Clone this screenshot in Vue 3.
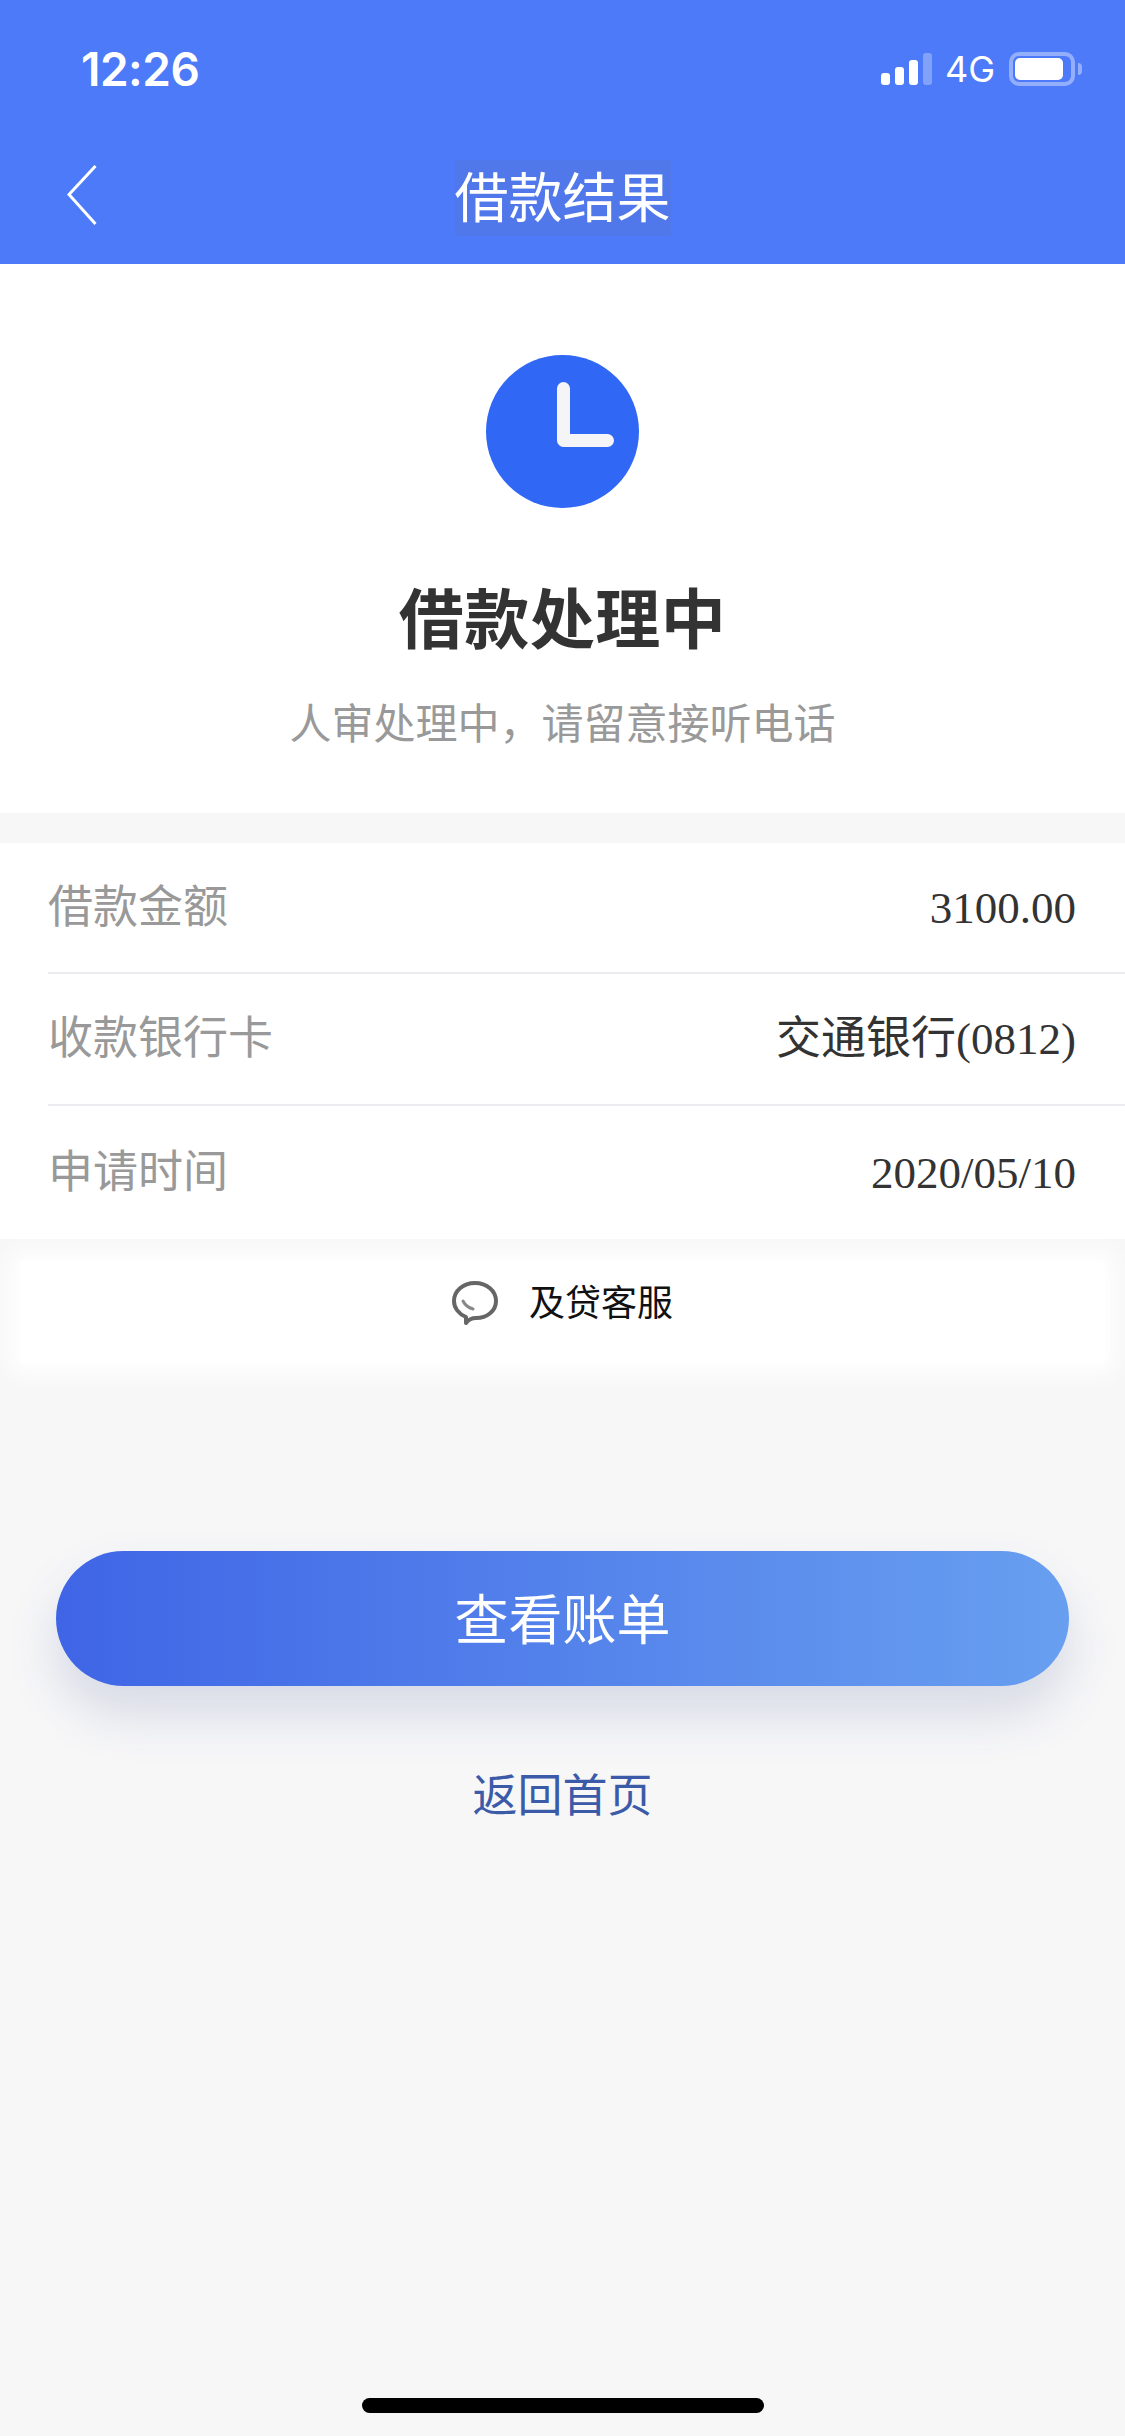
<template>
  <div class="page">
    <header class="header">
      <div class="status-bar">
        <span class="time">12:26</span>
        <div class="status-right">
          <div class="signal">
            <i class="bar b1"></i>
            <i class="bar b2"></i>
            <i class="bar b3"></i>
            <i class="bar b4"></i>
          </div>
          <span class="net">4G</span>
          <div class="battery"><i class="battery-level"></i></div>
          <i class="battery-cap"></i>
        </div>
      </div>
      <div class="nav">
        <svg class="back" viewBox="0 0 30 60" width="30" height="60" fill="none" stroke="#fff" stroke-width="3">
          <path d="M28.5 1 L2 29.5 L28.5 59" />
        </svg>
        <span class="nav-title">借款结果</span>
        <span></span>
      </div>
    </header>

    <section class="hero">
      <div class="clock">
        <svg viewBox="0 0 153 153" width="153" height="153" fill="none" stroke="#f5f5f7" stroke-width="13" stroke-linecap="round" stroke-linejoin="round">
          <path d="M77.5 33.5 V85.5 H121.5" />
        </svg>
      </div>
      <h1 class="hero-title">借款处理中</h1>
      <p class="hero-sub">人审处理中，请留意接听电话</p>
    </section>

    <section class="list">
      <div v-for="row in rows" :key="row.label" class="row">
        <span class="label">{{ row.label }}</span>
        <span class="value">{{ row.value }}</span>
      </div>
    </section>

    <div class="support">
      <svg viewBox="0 0 46 45" width="46" height="45" fill="none" stroke="#666" stroke-width="4" stroke-linejoin="round">
        <path d="M23 2C35 2 44 10 44 20C44 30 35 37 24 37C21 37 17 38 14 42L14 36C7 33 2 27 2 20C2 10 11 2 23 2Z" />
        <path d="M11 20Q14 26 21 28" stroke="#888" stroke-width="3" stroke-linecap="round" />
      </svg>
      <span>及贷客服</span>
    </div>

    <button class="primary">查看账单</button>
    <a class="home-link">返回首页</a>

    <div class="home-indicator"></div>
  </div>
</template>

<script setup>
const rows = [
  { label: '借款金额', value: '3100.00' },
  { label: '收款银行卡', value: '交通银行(0812)' },
  { label: '申请时间', value: '2020/05/10' }
]
</script>

<style>
html, body { margin: 0; background: #f7f7f8; }
</style>

<style scoped>
.page {
  width: 1125px;
  min-height: 2436px;
  display: flex;
  flex-direction: column;
  background: #f7f7f8;
  font-family: "Liberation Sans", "Noto Sans CJK SC", sans-serif;
}
.header { background: #4c7af8; height: 264px; }
.status-bar {
  height: 132px;
  padding: 6px 43px 0 81px;
  box-sizing: border-box;
  display: flex;
  align-items: center;
  justify-content: space-between;
  color: #fff;
}
.time { font-family: Inter, sans-serif; font-size: 46px; font-weight: 600; letter-spacing: -0.5px; }
.status-right { display: flex; align-items: center; }
.signal { display: flex; align-items: flex-end; gap: 5px; height: 32px; }
.bar { display: block; width: 9px; background: #fff; border-radius: 3px; }
.b1 { height: 12px; }
.b2 { height: 18px; }
.b3 { height: 25px; }
.b4 { height: 32px; background: rgba(255, 255, 255, 0.3); }
.net { font-family: Inter, sans-serif; font-size: 36px; margin: 0 14px 0 13px; }
.battery {
  width: 66px;
  height: 34px;
  box-sizing: border-box;
  border: 4px solid rgba(255, 255, 255, 0.4);
  border-radius: 10px;
  padding: 2px;
}
.battery-level { display: block; width: 48px; height: 22px; background: #fff; border-radius: 5px; }
.battery-cap {
  display: block;
  width: 4px;
  height: 12px;
  margin-left: 3px;
  background: rgba(255, 255, 255, 0.4);
  border-radius: 0 4px 4px 0;
}
.nav {
  height: 132px;
  padding-left: 67px;
  display: grid;
  grid-template-columns: 1fr auto 1fr;
  align-items: center;
  margin-right: 67px;
}
.back { margin-bottom: 6px; }
.nav-title {
  display: block;
  width: 216px;
  height: 76px;
  line-height: 78px;
  text-align: center;
  font-size: 54px;
  color: #fff;
  background: #5078ea;
}
.hero {
  height: 549px;
  box-sizing: border-box;
  padding-top: 91px;
  background: #fff;
  display: flex;
  flex-direction: column;
  align-items: center;
}
.clock { width: 153px; height: 153px; border-radius: 50%; background: #3068f5; }
.clock svg { display: block; }
.hero-title { margin: 68px 0 0; font-size: 65px; line-height: 90px; font-weight: 700; letter-spacing: 0.5px; color: #333; }
.hero-sub { margin: 28px 0 0; font-size: 42px; line-height: 62px; color: #999; }
.list { margin-top: 30px; padding-left: 48px; background: #fff; }
.row {
  height: 132px;
  box-sizing: border-box;
  padding-right: 49px;
  display: flex;
  align-items: center;
  justify-content: space-between;
  border-bottom: 2px solid #ececf1;
  font-size: 45px;
}
.row:first-child { height: 131px; }
.row:last-child { height: 133px; border-bottom: none; }
.label { color: #999; line-height: 60px; }
.value { font-family: "Liberation Serif", "Noto Sans CJK SC", serif; line-height: 60px; color: #333; }
.support {
  margin: 22px 20px 0;
  height: 103px;
  padding-bottom: 26px;
  box-sizing: border-box;
  display: flex;
  align-items: center;
  justify-content: center;
  gap: 31px;
  background: #fff;
  box-shadow: 0 0 22px 10px #fff;
  font-size: 36px;
  color: #111;
}
.support svg { margin-top: 8px; }
.primary {
  margin: 187px 56px 0;
  height: 135px;
  padding: 0 0 5px;
  border: none;
  border-radius: 68px;
  background: linear-gradient(90deg, #3f65e6, #689ff0);
  box-shadow: 0 28px 50px rgba(60, 80, 140, 0.17);
  font-family: inherit;
  font-size: 54px;
  color: #fff;
}
.home-link {
  margin-top: 81px;
  text-align: center;
  font-size: 45px;
  line-height: 60px;
  color: #3b5ba8;
}
.home-indicator {
  margin: auto auto 23px;
  width: 402px;
  height: 15px;
  border-radius: 8px;
  background: #000;
}
</style>
